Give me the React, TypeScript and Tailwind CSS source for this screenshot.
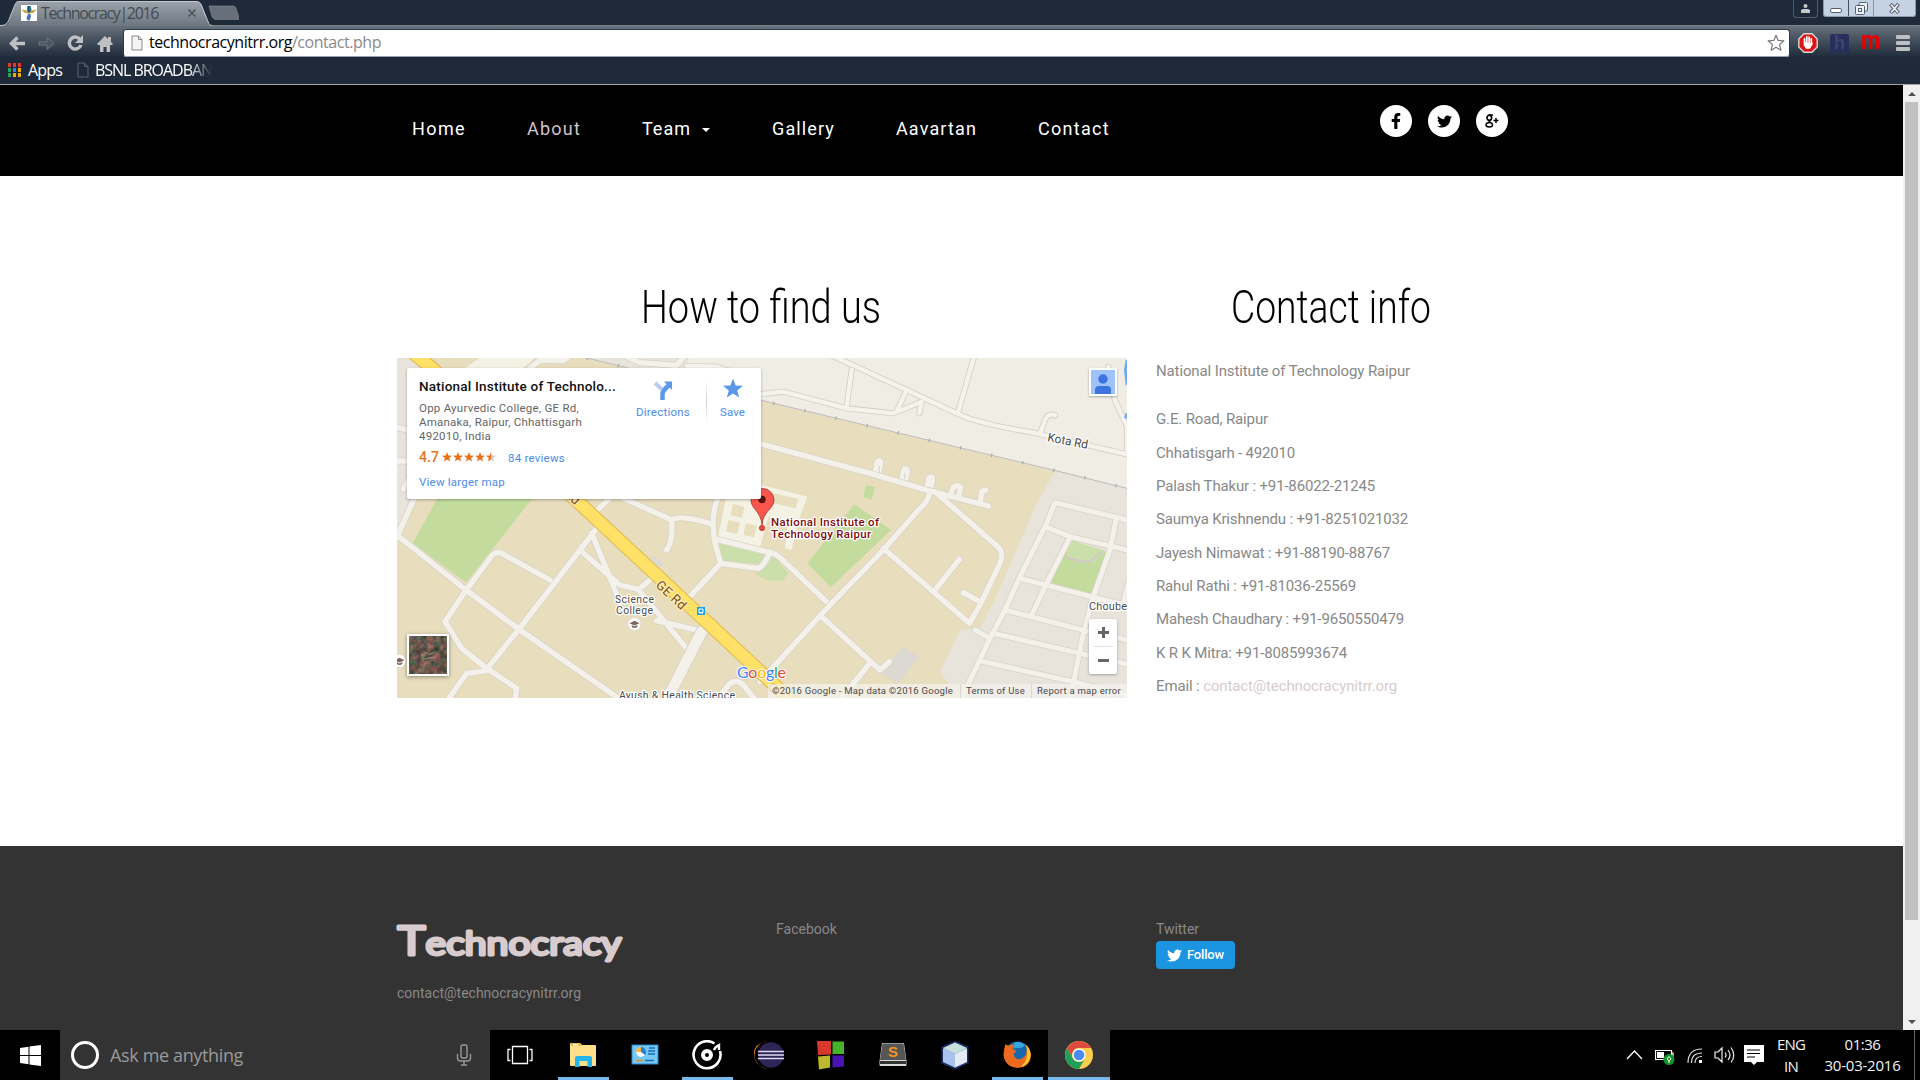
import { useLayoutEffect, useRef, type ReactNode } from "react";
import { FaFacebookF, FaTwitter } from "react-icons/fa";

/* Text set to an exact width, by letter spacing or by horizontal scaling. */
function Fit({ w, squeeze = false, className = "", children }: { w: number; squeeze?: boolean; className?: string; children: ReactNode }) {
  const ref = useRef<HTMLSpanElement>(null);
  useLayoutEffect(() => {
    const el = ref.current;
    if (!el) return;
    el.style.letterSpacing = "";
    el.style.transform = "";
    const natural = el.getBoundingClientRect().width;
    if (squeeze) el.style.transform = `scaleX(${w / natural})`;
    else el.style.letterSpacing = `${(w - natural) / Math.max(1, (el.textContent ?? "").length)}px`;
  }, [w, squeeze]);
  return (
    <span className={"block shrink-0 " + className} style={{ width: w }}>
      <span ref={ref} className="inline-block origin-left whitespace-nowrap">{children}</span>
    </span>
  );
}

const ui = "font-['Open_Sans','Noto_Sans',sans-serif]";

function PageIcon({ dark = false }: { dark?: boolean }) {
  return (
    <svg width="12" height="16" viewBox="0 0 12 16" className="shrink-0">
      <path d="M1 1h6.500L11 4.500V15H1z" fill={dark ? "none" : "#f4f4f4"} stroke={dark ? "#5d6064" : "#8a8a8a"} />
      <path d="M7.500 1v3.500H11" fill="none" stroke={dark ? "#5d6064" : "#8a8a8a"} />
    </svg>
  );
}

function Browser() {
  const squares = ["#e8382c", "#e8382c", "#e8382c", "#2e9e58", "#2f86ea", "#f2a90c", "#2e9e58", "#f2a90c", "#f2a90c"];
  return (
    <header className={"h-[85px] bg-[#1e2a3a] " + ui}>
      <div className="flex h-[25px] items-start">
        <div className="relative h-[26px] w-[212px] shrink-0">
          <svg width="212" height="26" viewBox="0 0 212 26" className="absolute left-0 top-0">
            <defs>
              <linearGradient id="tab" x1="0" y1="0" x2="0" y2="1">
                <stop offset="0" stopColor="#9ba2aa" />
                <stop offset="1" stopColor="#6d7680" />
              </linearGradient>
            </defs>
            <path d="M0 26c6 0 8-2 9-6l6-15c1-3 2-3.500 5-3.500h176c3 0 5 1 6 4l6 16c1 3 2 4.500 4 4.500z" fill="url(#tab)" />
            <path d="M0 25.500c6 0 7-2 9-6l6-15c1-2.500 2-3 5-3h176c3 0 4 1 5 3l7 17c1 3 2 4 4 4" fill="none" stroke="#c3c8ce" />
          </svg>
          <div className="relative flex h-[25px] items-center pl-[21px]">
            <svg width="16" height="16" viewBox="0 0 16 16" className="shrink-0">
              <path d="M0 0h16v16H0z" fill="#fff" />
              <path d="M0 4.500 6 5.500l2 1.500 2-1.500 6-1-4 3.500-4 .5-4-.5z" fill="#c8a24b" />
              <path d="M6.500 1h3l1 4-2.500 3.500L6 5z" fill="#195a80" />
              <path d="m8 3 2 1-1.500 2z" fill="#329a54" />
              <path d="M7 9h2.500l.5 3-1.500 3.500h-2L5.500 13z" fill="#4a72c4" />
            </svg>
            <Fit w={117} className="ml-[4px] text-[16px] leading-[24px] text-[#444a50]">Technocracy|2016</Fit>
            <svg width="10" height="10" viewBox="0 0 10 10" className="ml-[29px]"><path d="m1.500 1.500 7 7m0-7-7 7" stroke="#4c535a" strokeWidth="1.600" /></svg>
          </div>
        </div>
        <svg width="32" height="22" viewBox="0 0 32 22" className="-ml-[5px]"><path d="M2 6h24c2 0 2.500 1 3 2l3 9.500q.7 2-1 2H10c-3 0-4-1-5-3z" fill="#67707a" stroke="#7b848d" strokeWidth=".7" /></svg>
        <div className="ml-auto flex h-[17px]">
          <div className="flex h-[18px] w-[25px] justify-center rounded-b-[4px] border border-t-0 border-[#515b68] pt-[4px]">
            <svg width="9" height="9" viewBox="0 0 9 9"><circle cx="4.500" cy="2" r="2" fill="#c8c8c8" /><path d="M0 9V6l2-1h5l2 1v3z" fill="#c8c8c8" /></svg>
          </div>
          <div className="ml-[5px] mr-[4px] flex h-[17px] w-[93px] overflow-hidden rounded-b-[3px] border border-t-0 border-[#8b9bae] bg-[#c5d2e3]">
            <div className="flex w-[25px] items-end justify-center border-r border-[#44505f] pb-[3px]"><div className="h-[5px] w-[12px] rounded-[2px] border border-[#56606c] bg-white" /></div>
            <div className="flex w-[25px] items-center justify-center border-r border-[#8797a8]">
              <svg width="13" height="13" viewBox="0 0 13 13" fill="#eef3f9" stroke="#56606c"><rect x="4" y=".5" width="8.500" height="8.500" rx="1" /><rect x=".5" y="3.500" width="9" height="9" rx="1" /><rect x="3.500" y="6.500" width="3" height="3" /></svg>
            </div>
            <div className="flex w-[41px] items-center justify-center">
              <svg width="11" height="11" viewBox="0 0 11 11"><path d="m1.500 1 8 9m0-9-8 9" stroke="#56606c" strokeWidth="3.600" /><path d="m2 1.500 7 8m0-8-7 8" stroke="#f4f7fa" strokeWidth="1.600" /></svg>
            </div>
          </div>
        </div>
      </div>
      <div className="flex h-[32px] items-center border-t border-[#7b848d] bg-linear-to-b from-[#68717c] to-[#202c3b] pl-[9px]">
        <svg width="16" height="15" viewBox="0 0 16 15" className="mt-[4px]"><path d="M8.500 1.500 2.500 7.500l6 6M3 7.500h13" fill="none" stroke="#bfc0c2" strokeWidth="3.500" /></svg>
        <svg width="17" height="15" viewBox="0 0 17 15" className="ml-[13px] mt-[4px]"><path d="M1 6h8V1.500l7 6-7 6V9H1z" fill="#4a5460" stroke="#6e7781" /></svg>
        <svg width="17" height="17" viewBox="0 0 17 17" className="ml-[12px] mt-[4px]"><path d="M13.500 5A6 6 0 1 0 14 10" fill="none" stroke="#bfc0c2" strokeWidth="3.400" /><path d="M16 0v8H8z" fill="#bfc0c2" /></svg>
        <svg width="16" height="16" viewBox="0 0 16 16" className="ml-[13px] mt-[4px]"><path d="M8 0 0 8l1 1h2v7h3.500v-5h3v5H13V9h2l1-1-2-2V1h-3v2z" fill="#bfc0c2" /></svg>
        <div className="ml-[10px] mt-[3px] flex h-[28px] w-[1667px] items-center rounded-[3px] border border-[#303a46] border-b-[#98a0a8] bg-white pl-[7px]">
          <PageIcon />
          <Fit w={232} className="-mt-[2px] ml-[6px] text-[16px] leading-[26px] text-black">technocracynitrr.org<span className="text-[#8a8a8a]">/contact.php</span></Fit>
          <svg width="18" height="18" viewBox="0 0 18 18" className="ml-auto mr-[4px]"><path d="m9 1.200 2.200 5.200 5.600.5-4.200 3.700 1.300 5.600L9 13.300l-4.900 2.900 1.300-5.600L1.200 6.900l5.600-.5z" fill="#fff" stroke="#777" strokeWidth="1.200" strokeLinejoin="round" /></svg>
        </div>
        <svg width="20" height="20" viewBox="0 0 20 20" className="ml-[8px] mt-[3px]">
          <path d="M6 .8h8L19.200 6v8L14 19.200H6L.8 14V6z" fill="#dc1414" stroke="#d8d8d8" strokeWidth="1.400" />
          <path d="M6.500 10V5.500m2.300 4V3.800m2.300 5.700V4m2.200 6V5.500M6.500 9v3l2 3h3l2.500-4.500" fill="#fff" stroke="#fff" strokeWidth="1.700" strokeLinecap="round" />
        </svg>
        <div className="ml-[12px] mt-[3px] flex h-[19px] w-[19px] items-center justify-center rounded-[2px] bg-[#27305a] font-['Roboto',sans-serif] text-[19px] font-medium text-[#3d4870]">h</div>
        <div className="ml-[13px] mt-[-2px] h-[28px] w-[20px] font-['Roboto',sans-serif] text-[25px] font-bold leading-[28px] tracking-[-1px] text-[#e80000]"><span className="-ml-[1px] inline-block scale-x-90 origin-left">m</span></div>
        <div className="ml-[14px] mt-[3px] flex flex-col gap-[2px]">
          <i className="block h-[4px] w-[14px] rounded-[1px] bg-[#bcbfc3]" /><i className="block h-[4px] w-[14px] rounded-[1px] bg-[#bcbfc3]" /><i className="block h-[4px] w-[14px] rounded-[1px] bg-[#bcbfc3]" />
        </div>
      </div>
      <div className="flex h-[28px] items-center border-b border-[#a1a7a4] pb-[2px] pl-[8px]">
        <div className="grid grid-cols-3 gap-x-[2px] gap-y-[1px]">
          {squares.map((c, i) => <i key={i} className="block h-[4px] w-[3px]" style={{ backgroundColor: c }} />)}
        </div>
        <Fit w={34} className="ml-[7px] text-[16px] leading-[24px] text-white">Apps</Fit>
        <div className="ml-[15px]"><PageIcon dark /></div>
        <div className="ml-[6px] mask-r-from-80% mask-r-to-100%"><Fit w={117} className="text-[16px] leading-[24px] text-white">BSNL BROADBAN</Fit></div>
      </div>
    </header>
  );
}

const nav = [
  { t: "Home", w: 54, cell: "w-[115px]" },
  { t: "About", w: 54, cell: "w-[115px]" },
  { t: "Team", w: 49, cell: "w-[130px]" },
  { t: "Gallery", w: 63, cell: "w-[124px]" },
  { t: "Aavartan", w: 81, cell: "w-[142px]" },
  { t: "Contact", w: 72, cell: "w-[80px]" },
];

function Nav() {
  return (
    <nav className="flex h-[91px] bg-black pl-[412px] text-[18px] text-white">
      {nav.map((n) => (
        <div key={n.t} className={"flex h-[86px] shrink-0 items-center " + n.cell + (n.t === "About" ? " text-[#cfc4c8]" : "")}>
          <Fit w={n.w}>{n.t}</Fit>
          {n.t === "Team" && <i className="ml-[11px] mt-[4px] block border-x-[4px] border-t-[4px] border-x-transparent border-t-white" />}
        </div>
      ))}
      <div className="ml-[262px] mt-[20px] flex gap-[16px] text-black">
        <div className="flex h-[32px] w-[32px] items-center justify-center rounded-full bg-white"><FaFacebookF size={16} /></div>
        <div className="flex h-[32px] w-[32px] items-center justify-center rounded-full bg-white"><FaTwitter size={15} /></div>
        <div className="flex h-[32px] w-[32px] items-center justify-center rounded-full bg-white">
          <svg width="14" height="14" viewBox="0 0 14 14" fill="none" stroke="#000">
            <ellipse cx="4.300" cy="3.800" rx="2.300" ry="2.600" strokeWidth="1.700" />
            <path d="M4 1.100h4M4.300 6.400q-1 1 .7 1.800c2.500 1 2.600 1.700 2.600 2.500 0 1.600-1.700 2.300-3.400 2.300S1 12.300 1 10.800s1.600-2.300 4-2.300" strokeWidth="1.500" />
            <path d="M11 4v5M8.500 6.500h5" strokeWidth="1.500" />
          </svg>
        </div>
      </div>
    </nav>
  );
}

const leftRoads = [
  "M21 555 228 720 390 840 700 1055", "M228 720 165 815 215 895 290 955 380 1015 375 1055", "M230 718 305 618Q318 603 335 610L480 690",
  "M290 958 385 840 620 535M600 500 665 440", "M292 962 230 970 170 1055", "M605 550 665 695 690 760M575 590V605L690 705 745 718 885 890M745 720 780 690M800 812 940 845",
  "M21 560 75 440", "M690 440 845 510Q850 570 830 600M845 510Q870 492 965 522", "M985 440Q960 500 975 580L992 640 895 745M992 640 1105 655Q1125 645 1140 605",
  "M980 568 1130 605Q1160 610 1180 632L1320 765", "M975 1055 1020 1000Q1040 985 1060 1005L1100 1055", "M410 64 450 30 520 32 550 10M690 10 750 38 860 46 890 10", "M21 232 70 245M21 333H70M60 380 40 418",
];
const rightRoads = [
  "M-20 276 330 370 500 420 685 468", "M510 425Q505 455 480 475L370 600 210 765 0 995", "M525 425 715 592Q732 608 720 640L660 765Q640 800 628 820L370 595",
  "M525 720 598 628M610 728 660 755", "M185 800 360 960 388 935M325 945 240 1050", "M570 440 580 412Q592 402 602 412L595 440M660 460 665 425 677 420",
];
const lightRoads = [
  "M180 0 440 120 590 190Q650 220 830 250L1110 315", "M275 60 260 170", "M-20 135 70 125 260 175 400 190 485 155 478 190M435 130 410 185", "M645 10 595 185", "M842 247 855 210Q865 188 886 196", "M1045 50 1065 150 1101 230V300",
  "M-220 48 -130 50-40 80",
];
const cityRoads = [
  "M1110 512 885 458 860 520 780 680 735 780 690 865 600 1055", "M855 530 930 560 1110 602", "M930 562 860 700 815 795", "M1068 510 1050 600 1000 740 970 850 930 1050", "M780 685 1110 770", "M735 780 975 842 1110 872", "M645 840 690 865M700 850 960 910 1110 945", "M670 935 960 1000 1110 1040", "M1110 680 1090 760",
];

function Roads({ list, w, fill = "#f4f1ea", edge = "#d9d4ca" }: { list: string[]; w: number; fill?: string; edge?: string }) {
  const d = list.join("");
  return (
    <g fill="none" strokeLinecap="round" strokeLinejoin="round">
      <path d={d} stroke={edge} strokeWidth={w + 5} />
      <path d={d} stroke={fill} strokeWidth={w} />
    </g>
  );
}

function CapIcon({ x, y }: { x: number; y: number }) {
  return (
    <g transform={`translate(${x} ${y})`}>
      <circle r="6.500" fill="#fff" stroke="#ccc" strokeWidth=".5" />
      <path d="M-5-.8 0-3.200 5-.8 0 1.600zM-2.800 1v2Q0 5 2.800 3V1L0 2.400z" fill="#7d665c" />
    </g>
  );
}

function MapArt() {
  return (
    <svg width="730" height="340" viewBox="0 0 730 340" className="block font-['Roboto',sans-serif]">
      <path d="M0 0h730v340H0z" fill="#e8ddbd" />
      <g transform="translate(-7 -8) scale(.33333)">
        <path d="M21 24h80v423H75L21 545z" fill="#e8e4dc" />
        <path d="M225 54 270 24h165l-35 30z" fill="#f4f2e4" />
        <path d="M590 24h320v78z" fill="#e8e4dc" />
        <path d="M145 440h286L228 697 68 580z" fill="#c3db9d" />
        <path d="M985 575 1110 605 1120 640 1000 638zM1095 668 1110 610 1160 625 1195 672 1175 693 1125 690z" fill="#cbdfab" />
        <path d="m790 618 32 20-18 22-32-22z" fill="#dcd8d2" />
        <path d="M1020 380 1252 440 1230 500 1204 600 1185 595 1195 510 1135 500 1110 590 985 560 1010 430z" fill="#f4f2e4" />
        <path d="m1028 462 35 8-7 34-34-8zM1016 510l34 8-8 34-34-8zM1068 520l32 8-8 34-32-8zM1130 425l95 22-8 28-95-22zM1020 400h60l-6 22-60-10z" fill="#e8ddbd" />
        <Roads list={leftRoads} w={16} />
        <Roads list={["M935 845 825 1060"]} w={32} />
      </g>
      <g transform="translate(363 -8) scale(.33333)">
        <path d="M-215 24H1101V415L0 150-215 98z" fill="#f0ede4" />
        <path d="M885 365 830 460 700 760 660 835 600 840 540 965 600 1050H1101V415z" fill="#e8e4dc" />
        <path d="M283 463 393 540 212 712 142 640zM318 405l27 7-10 37-26-8z" fill="#c3db9d" />
        <path d="m430 890 48 30-65 82-54-36z" fill="#dcd8d2" />
        <path d="M930 570 1040 605 1005 738 870 705z" fill="#c3db9d" />
        <path d="M930 570 1036 603 1000 640Q960 635 918 620z" fill="#cbdfab" />
        <path d="M918 620Q960 638 990 635L1027 604" fill="none" stroke="#cfcac2" strokeWidth="7" />
        <Roads list={lightRoads} w={13} fill="#f5f3ee" edge="#d6cfc0" />
        <Roads list={cityRoads} w={15} />
        <Roads list={["M350 372 357 338M430 392 437 362M506 418 512 386"]} w={27} />
        <Roads list={rightRoads} w={16} />
        <path d="M358 368V348M434 388V368" stroke="#d9d4ca" strokeWidth="3" />
        <path d="M-520 24 0 150 880 360 1101 415" fill="none" stroke="#bcbcc0" strokeWidth="3" />
        <path d="M-520 24 0 150 880 360 1101 415" fill="none" stroke="#9fa3aa" strokeWidth="11" strokeDasharray="3 93" />
        <path d="M1101 30 1096 60 1101 105M1101 190 1096 205" fill="none" stroke="#6fa8f5" strokeWidth="8" />
      </g>
      <g transform="translate(-7 -8) scale(.33333)" fill="none">
        <path d="M60 0 125 54 555 447 1220 1067" stroke="#e0bd55" strokeWidth="43" />
        <path d="M60 0 125 54 555 447 1220 1067" stroke="#ffe168" strokeWidth="36" />
      </g>
      <g stroke="#fff" strokeWidth="2.500" strokeLinejoin="round" paintOrder="stroke" fill="#4a4a4a">
        <text transform="translate(258 228) rotate(43)" fontSize="13" fill="#7a4a1c" stroke="#ffeeb0" textLength="36">GE Rd</text>
        <text transform="translate(167 137) rotate(43)" fontSize="13" fill="#7a4a1c" stroke="#ffeeb0">Rd</text>
        <text x="218" y="244.500" fontSize="10.500" textLength="39">Science</text>
        <text x="219" y="255.500" fontSize="10.500" textLength="37">College</text>
        <text x="222" y="340.500" fontSize="10.500" textLength="116">Ayush &amp; Health Science</text>
        <text transform="translate(650 83) rotate(11)" fontSize="12" textLength="41">Kota Rd</text>
        <text x="692" y="252" fontSize="11" textLength="38">Choube</text>
        <text x="374" y="168" fontSize="11.500" fontWeight="500" fill="#7d0a10" textLength="108">National Institute of</text>
        <text x="374" y="180" fontSize="11.500" fontWeight="500" fill="#7d0a10" textLength="100">Technology Raipur</text>
      </g>
      <CapIcon x={237.500} y={266} />
      <CapIcon x={2.500} y={303} />
      <rect x="300" y="249" width="8" height="8" fill="#12a5e8" />
      <path d="M302 251h4v3.500h-4zM302.500 255.500h1m1.500 0h1" fill="none" stroke="#fff" />
      <path d="M365 167C364 153 354 151 354 142a11.500 11.500 0 0 1 23 0c0 9-11 11-12 25z" fill="#f9574d" stroke="#a8322b" strokeWidth=".8" />
      <circle cx="365" cy="141.500" r="3.700" fill="#5c1210" />
      <circle cx="365" cy="170" r="2.700" fill="#e8453c" stroke="#a8322b" strokeWidth=".6" />
      <text x="340" y="319.500" fontSize="16" fontFamily="Lato" textLength="49" stroke="#fff" strokeWidth="2" paintOrder="stroke">
        <tspan fill="#4285f4">G</tspan><tspan fill="#e84435">o</tspan><tspan fill="#f6b704">o</tspan><tspan fill="#4285f4">g</tspan><tspan fill="#34a853">l</tspan><tspan fill="#e84435">e</tspan>
      </text>
      <circle cx="376" cy="330" r="4" fill="none" stroke="#a07850" />
    </svg>
  );
}

const star = "M5 0 6.300 3.500 10 3.700 7.100 6 8.100 9.600 5 7.500 1.900 9.600 2.900 6 0 3.700 3.700 3.500z";

function MapPanel() {
  return (
    <div className="relative h-[340px] w-[730px] overflow-hidden">
      <MapArt />
      <div className="absolute left-[10px] top-[10px] flex h-[131px] w-[354px] rounded-[2px] bg-white pl-[12px] shadow-[0_1px_3px_rgba(0,0,0,.3)]">
        <div className="w-[200px] pt-[9px] text-[11.500px] leading-[14px] text-[#666]">
          <Fit w={197} className="mb-[6px] text-[13.500px] font-medium leading-[18px] text-[#111]">National Institute of Technolo...</Fit>
          <Fit w={160}>Opp Ayurvedic College, GE Rd,</Fit>
          <Fit w={163}>Amanaka, Raipur, Chhattisgarh</Fit>
          <Fit w={72}>492010, India</Fit>
          <div className="mt-[5px] flex h-[18px] items-center">
            <Fit w={20} className="text-[14px] font-medium text-[#e7711b]">4.7</Fit>
            <svg width="55" height="10" viewBox="0 0 55 10" className="ml-[3px]">
              <path d="M49 0 50.300 3.500 54 3.700 51.100 6 52.100 9.600 49 7.500z" fill="#ccc" />
              {[0, 11, 22, 33].map((x) => <path key={x} d={star} transform={`translate(${x} 0)`} fill="#e7711b" />)}
              <path d="M49 0V7.500L45.900 9.600 46.900 6 44 3.700 47.700 3.500z" fill="#e7711b" />
            </svg>
            <Fit w={57} className="ml-[11px] mt-[1px] text-[#4a8ceb]">84 reviews</Fit>
          </div>
          <Fit w={86} className="mt-[9px] text-[#4a8ceb]">View larger map</Fit>
        </div>
        <div className="flex h-[52px] pt-[12px] text-[11.500px] leading-[14px] text-[#4a8ceb]">
          <div className="ml-[17px] flex w-[54px] flex-col items-center">
            <svg width="20" height="20" viewBox="0 0 20 20"><path d="M2 3 9 9.500" stroke="#b5cff5" strokeWidth="4" /><path d="M9.500 20v-6q0-3 6-8.500" fill="none" stroke="#5b98e8" strokeWidth="4.500" /><path d="M11 1.500h8V10z" fill="#5b98e8" /></svg>
            <Fit w={54} className="mt-[5px]">Directions</Fit>
          </div>
          <i className="ml-[16px] block h-[43px] w-px bg-linear-to-b from-white via-[#ccc] to-white" />
          <div className="ml-[13px] flex flex-col items-center">
            <svg width="20" height="20" viewBox="0 0 10 9.600" className="-mt-[2px] mb-[2px]"><path d={star} fill="#5b98e8" /></svg>
            <Fit w={25} className="mt-[5px]">Save</Fit>
          </div>
        </div>
      </div>
      <div className="absolute right-[10px] top-[10px] h-[28px] w-[28px] border-2 border-white bg-[#a0c2fb] shadow-[0_1px_2px_rgba(0,0,0,.3)]">
        <svg width="24" height="24" viewBox="0 0 24 24" fill="#3d73dd"><circle cx="12" cy="9" r="4.700" /><path d="M4 24v-4q0-4 4-4h8q4 0 4 4v4z" /></svg>
      </div>
      <div className="absolute right-[10px] top-[261px] flex h-[55px] w-[28px] flex-col items-center justify-center gap-[8px] rounded-[2px] bg-white shadow-[0_1px_3px_rgba(0,0,0,.3)]">
        <svg width="11" height="11" viewBox="0 0 11 11"><path d="M5.500 0v11M0 5.500h11" stroke="#666" strokeWidth="3" /></svg>
        <i className="block h-px w-[19px] bg-[#e0e0e0]" />
        <svg width="11" height="11" viewBox="0 0 11 11"><path d="M0 5.500h11" stroke="#666" strokeWidth="3" /></svg>
      </div>
      <div className="absolute left-[10px] top-[276px] h-[42px] w-[42px] border-2 border-white shadow-[0_1px_4px_rgba(0,0,0,.4)]">
        <svg width="38" height="38" viewBox="0 0 38 38">
          <filter id="ground" x="0" y="0" width="1" height="1" colorInterpolationFilters="sRGB"><feTurbulence type="fractalNoise" baseFrequency=".16" numOctaves="3" seed="4" /><feColorMatrix values=".7 .2 0 0 -.04  .2 .35 0 0 .07  .2 .2 .1 0 .05  0 0 0 0 1" /></filter>
          <rect width="38" height="38" filter="url(#ground)" />
          <path d="m12 20 5-4 3 3 5-3M14 23l12-2" stroke="#a89a8c" strokeWidth=".8" fill="none" />
        </svg>
      </div>
      <div className="absolute bottom-0 right-0 flex h-[14px] items-center bg-[#f4f2ee]/75 text-[9.500px] leading-[14px] text-[#4a4a4a]">
        <Fit w={181} className="ml-[4px]">©2016 Google - Map data ©2016 Google</Fit>
        <i className="ml-[7px] block h-[14px] w-px bg-[#ddd9d0]" />
        <Fit w={59} className="ml-[5px]">Terms of Use</Fit>
        <i className="ml-[6px] block h-[14px] w-px bg-[#ddd9d0]" />
        <Fit w={84} className="ml-[5px] mr-[6px]">Report a map error</Fit>
      </div>
    </div>
  );
}

const people: [string, number][] = [
  ["G.E. Road, Raipur", 112], ["Chhatisgarh - 492010", 139], ["Palash Thakur : +91-86022-21245", 219], ["Saumya Krishnendu : +91-8251021032", 252],
  ["Jayesh Nimawat : +91-88190-88767", 234], ["Rahul Rathi : +91-81036-25569", 200], ["Mahesh Chaudhary : +91-9650550479", 248], ["K R K Mitra: +91-8085993674", 191],
];

function Main() {
  return (
    <main className="flex h-[670px] bg-white pl-[397px] pt-[97px]">
      <section className="w-[730px]">
        <h2 className="flex h-[85px] items-start pl-[244px] pt-[1px] text-[47px] font-light leading-[66px] text-black"><Fit w={240} squeeze>How to find us</Fit></h2>
        <MapPanel />
      </section>
      <section className="ml-[29px] w-[350px] text-[15px] text-[#888]">
        <h2 className="flex h-[82px] items-start pl-[75px] pt-[1px] text-[47px] font-light leading-[66px] text-black"><Fit w={200} squeeze>Contact info</Fit></h2>
        <Fit w={254} className="mb-[15px] leading-[33.330px]">National Institute of Technology Raipur</Fit>
        {people.map(([t, w]) => <Fit key={t} w={w} className="leading-[33.330px]">{t}</Fit>)}
        <Fit w={241} className="leading-[33.330px]">Email : <span className="text-[#d8ccce]">contact@technocracynitrr.org</span></Fit>
      </section>
    </main>
  );
}

function Footer() {
  return (
    <footer className="flex h-[184px] bg-[#333] pl-[396px] pt-[72px] text-[14px] text-[#888]">
      <div className="w-[380px]">
        <svg width="230" height="50" viewBox="0 0 230 50" className="block" fill="#d8ccce" stroke="#d8ccce" strokeWidth="3" strokeLinejoin="round" fontFamily="Lato">
          <text x="1.500" y="36.500" fontSize="33" textLength="224" lengthAdjust="spacingAndGlyphs"><tspan fontSize="40">T</tspan>echnocracy</text>
        </svg>
        <Fit w={184} className="ml-[1px] mt-[15px] leading-[20px]">contact@technocracynitrr.org</Fit>
      </div>
      <div className="w-[380px]"><Fit w={61} className="mt-px leading-[20px]">Facebook</Fit></div>
      <div>
        <Fit w={43} className="mt-px leading-[20px]">Twitter</Fit>
        <div className="mt-[2px] flex h-[28px] w-[79px] items-center rounded-[4px] bg-[#1b95e0] pl-[11px] text-[13px] font-medium text-white">
          <FaTwitter size={15} />
          <Fit w={37} className="ml-[5px]">Follow</Fit>
        </div>
      </div>
    </footer>
  );
}

function AppIcon({ name }: { name: string }) {
  const p = { width: 30, height: 30, viewBox: "0 0 30 30" };
  switch (name) {
    case "tasks":
      return <svg {...p} fill="none" stroke="#fff" strokeWidth="1.300"><path d="M6.500 6.500h15v17h-15zM4.500 9.500h-2.500v11h2.500M23.500 9.500H26v11h-2.500" /></svg>;
    case "files":
      return <svg {...p}><path d="M2 4q0-1 1-1h9l2 2h13q1 0 1 1v19q0 1-1 1H3q-1 0-1-1z" fill="#ffe08a" /><path d="M3 3h9l1.500 3H3z" fill="#e8b838" /><path d="M5 4h5v1.500H5z" fill="#fff" /><path d="M7 27v-9q0-2 2-2h13q2 0 2 2v9h-4.500v-6h-8v6z" fill="#24b4ee" /></svg>;
    case "panel":
      return <svg {...p}><rect x="2" y="5" width="26" height="19" fill="#72c8f8" stroke="#2f88c8" /><circle cx="11" cy="12" r="5" fill="#2b7fd0" /><path d="M11 12V7a5 5 0 1 0 4 8z" fill="#f4f9fd" /><path d="M11 12V7a5 5 0 0 0-5 5z" fill="#ffb43a" /><path d="M19 8h6m-7 3h7m-7 3h7" stroke="#1c6bb5" strokeWidth="1.400" /><path d="M6 20.500h7" stroke="#f28a1c" strokeWidth="1.500" /><path d="M15 20.500h9" stroke="#1c6bb5" strokeWidth="1.500" /></svg>;
    case "groove":
      return <svg {...p} fill="none" stroke="#fff"><path d="M22.500 3.500A13.500 13.500 0 1 0 28 11" strokeWidth="2.600" /><circle cx="15" cy="15" r="4" strokeWidth="4" /><path d="M22 10q1-3 5-5v5" strokeWidth="2.400" /></svg>;
    case "eclipse":
      return <svg {...p}><path d="M14 1.500a13.500 13.500 0 0 0 0 27Q1 27 0 15T14 1.500" fill="#f39019" /><ellipse cx="17" cy="15" rx="12.800" ry="12.700" fill="#2d2457" /><path d="M4 11.500h26M4 15h26M4 18.500h26" stroke="#ded9f0" strokeWidth="1.600" /></svg>;
    case "blocks":
      return <svg {...p}><path d="M1 1h14v13.500L2 15z" fill="#d7382b" /><path d="M16.500 1.500H28v12.500H16.500z" fill="#45b32b" /><path d="m2 16.500 12-1v12L3 29.500z" fill="#bdb92d" /><path d="M16.500 15.500H28v11l-11.500 1z" fill="#4a13b5" /></svg>;
    case "sublime":
      return <svg {...p}><path d="M4 3h22l2.500 18.500V25q0 1-1 1h-25q-1 0-1-1v-3.500z" fill="#d8d8d8" /><path d="M4.500 3.500h21L28 20H2z" fill="#565656" /><path d="M2 21h26v3H2z" fill="#333" /><text x="15" y="16.500" textAnchor="middle" fontFamily="Liberation Sans" fontWeight="700" fontSize="15" fill="#f69322">S</text></svg>;
    case "cube":
      return <svg {...p}><path d="M15 2 27.500 7.500v15L15 28.500 2.500 22.500v-15z" fill="#8fa9d8" stroke="#1c2e68" strokeWidth="2" /><path d="M15 2.500 27 8 15 13.500 3 8z" fill="#c8e0dc" /><path d="M3 8.500 15 14v13.500L3 22z" fill="#a9c4ec" /><path d="M27 8.500 15 14v13.500L27 22z" fill="#e4ebf5" /></svg>;
    case "firefox":
      return <svg {...p}><circle cx="15.500" cy="14" r="12.500" fill="#1767ab" /><path d="M12 3q6-3 11 2-3 4-6 3t-5 1z" fill="#35a8dc" /><path d="M3.500 4q2 2 4 1.500 3-1.500 5-.5l-2 4 4 2-3 3 1 3q4 4 8 1 4-2 4-7 1-4-2-7 6 4 6.500 11-.5 12-13.500 13Q3 27 1.500 15 2 8 3.500 4" fill="#ec6a20" /><path d="M23 4q6 5 5.500 12-1 9-10 11 6-5 6.500-12 1-6-2-11" fill="#ffc52b" /></svg>;
    default:
      return <svg {...p}><circle cx="15" cy="15" r="14" fill="#fcd04c" /><path d="M2.900 8a14 14 0 0 1 24.200 0H15a7 7 0 0 0-6.100 10.500z" fill="#dd4b3e" /><path d="M2.900 8a14 14 0 0 0 12.100 21l6.100-10.500A7 7 0 0 1 8.900 18.500z" fill="#1f9e5a" /><circle cx="15" cy="15" r="6.600" fill="#fff" /><circle cx="15" cy="15" r="5.300" fill="#4a8af4" /></svg>;
  }
}

const apps = [
  ["tasks", 0], ["files", 1], ["panel", 0], ["groove", 1], ["eclipse", 0], ["blocks", 0], ["sublime", 0], ["cube", 0], ["firefox", 1], ["chrome", 2],
] as const;

function Taskbar() {
  return (
    <div className={"flex h-[50px] bg-black " + ui}>
      <div className="flex w-[60px] items-center justify-center">
        <svg width="21" height="21" viewBox="0 0 21 21" fill="#fff"><path d="M0 3 8.500 1.800V10H0zM9.500 1.600 21 0v10H9.500zM0 11h8.500v8.200L0 18zM9.500 11H21v10L9.500 19.400z" /></svg>
      </div>
      <div className="flex w-[430px] items-center bg-[#333]">
        <div className="ml-[11px] h-[28px] w-[28px] rounded-full border-[3.500px] border-white" />
        <Fit w={133} className="ml-[11px] text-[18px] leading-[26px] text-[#9a9a9a]">Ask me anything</Fit>
        <svg width="16" height="22" viewBox="0 0 16 22" className="ml-auto mr-[18px]" fill="none" stroke="#999" strokeWidth="1.400"><rect x="5" y="1" width="6" height="13" rx="1.500" /><path d="M1.500 10v4q0 3 3 3h7q3 0 3-3v-4M8 17v4M5 21h6" /></svg>
      </div>
      {apps.map(([n, s]) => (
        <div key={n} className={"relative flex w-[62px] shrink-0 items-center justify-center " + (s === 2 ? "bg-[#333]" : "")}>
          <AppIcon name={n} />
          {s === 1 && <i className="absolute bottom-0 left-[6px] block h-[3px] w-[51px] bg-[#76b9ed]" />}
          {s === 2 && <i className="absolute bottom-0 left-0 block h-[3px] w-full bg-[#76b9ed]" />}
        </div>
      ))}
      <div className="ml-auto flex items-center text-[#f2f2f2]">
        <svg width="17" height="10" viewBox="0 0 17 10"><path d="m1 9 7.500-8L16 9" fill="none" stroke="#fff" strokeWidth="1.300" /></svg>
        <svg width="20" height="18" viewBox="0 0 20 18" className="ml-[12px] mt-[4px]"><path d="M.5 2.500h16v9H.5zM17 5h1v4h-1" fill="none" stroke="#fff" strokeWidth="1.200" /><path d="M2 4h7v6H2z" fill="#fff" /><circle cx="14" cy="11.500" r="5.500" fill="#149428" /><path d="M14 8.500 16 11l-2 2-2-2zM14 12v3" fill="none" stroke="#fff" /></svg>
        <svg width="16" height="16" viewBox="0 0 16 16" className="ml-[12px] mt-[2px]" fill="none" stroke="#ddd" strokeWidth="1.200"><path d="M1 15Q1 1 15 1M4.500 15q0-10 10.500-10M8 15q0-6.500 7-6.500" /><path d="M12 12h3v3h-3z" fill="#fff" stroke="none" /></svg>
        <svg width="21" height="18" viewBox="0 0 21 18" className="ml-[11px]" fill="none" stroke="#eee" strokeWidth="1.200"><path d="M1 6h3l4-4v14l-4-4H1zM11 6.500q2 2.500 0 5M14 4q4 5 0 10M17 1.500q5.500 7.500 0 15" /></svg>
        <svg width="20" height="20" viewBox="0 0 20 20" className="ml-[9px]"><path d="M0 0h20v17h-7l-3 3-3-3H0z" fill="#fff" /><path d="M3 5h13M3 8.500h13M3 12h8" stroke="#000" strokeWidth="1.200" /></svg>
        <div className="ml-[12px] flex w-[30px] flex-col items-center text-[15px] leading-[22px]"><Fit w={28}>ENG</Fit><Fit w={14}>IN</Fit></div>
        <div className="-mt-[1px] ml-[18px] flex w-[77px] flex-col items-center text-[15px] leading-[21px]"><Fit w={36}>01:36</Fit><Fit w={76}>30-03-2016</Fit></div>
        <i className="ml-[13px] mr-[5px] block h-[50px] w-px bg-[#666]" />
      </div>
    </div>
  );
}

export default function App() {
  return (
    <div className="h-[1080px] w-[1920px] overflow-hidden bg-white font-['Roboto',sans-serif]">
      <Browser />
      <div className="flex h-[945px]">
        <div className="w-[1903px]">
          <Nav />
          <Main />
          <Footer />
        </div>
        <div className="flex w-[17px] flex-col items-center bg-[#f0f0f0]">
          <div className="flex h-[17px] items-center"><i className="block border-x-[4px] border-b-[4px] border-x-transparent border-b-[#505050]" /></div>
          <div className="h-[818px] w-[13px] bg-[#c1c1c1]" />
          <div className="mt-auto flex h-[17px] items-center"><i className="block border-x-[4px] border-t-[4px] border-x-transparent border-t-[#505050]" /></div>
        </div>
      </div>
      <Taskbar />
    </div>
  );
}
